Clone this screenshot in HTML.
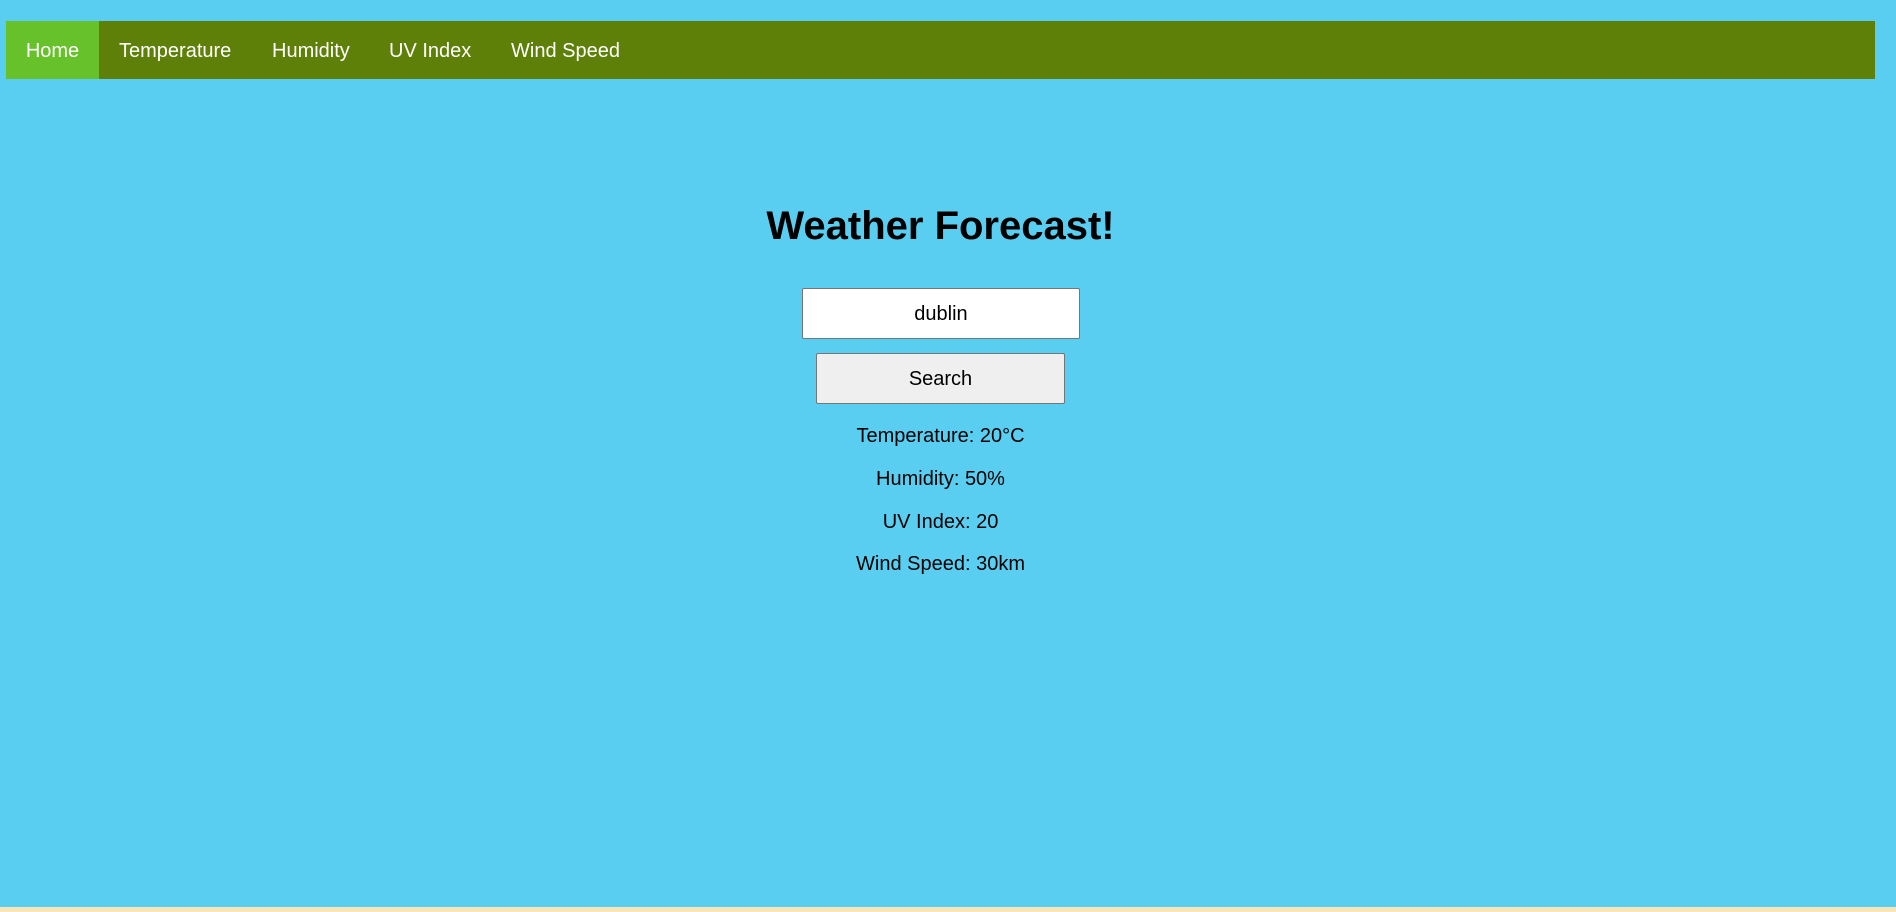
<!DOCTYPE html>
<html><head><meta charset="utf-8"><style>
html,body{margin:0;padding:0;width:1896px;height:912px;overflow:hidden;background:#5acef0;font-family:"Liberation Sans",Arial,sans-serif;position:relative}
.nav{position:absolute;left:6px;top:21px;width:1869px;height:58px;background:#5e7f08}
.nav a{position:absolute;top:1px;height:58px;line-height:58px;color:#fff;font-size:20px;text-decoration:none}
.home{background:#66c12a;left:0;top:0 !important;width:93px;text-align:center}
.home span{position:relative;top:1px}
.c{position:absolute;left:0;width:1881px;text-align:center;color:#000}
h1{margin:0;font-size:40px;font-weight:bold}
.inp{position:absolute;left:802px;top:288px;width:276px;height:49px;background:#fff;border:1px solid #767676;border-radius:2px;text-align:center;line-height:51px;font-size:20px}
.btn{position:absolute;left:816px;top:353px;width:247px;height:49px;background:#efefef;border:1px solid #767676;border-radius:2px;text-align:center;line-height:51px;font-size:20px}
.r{font-size:20px;line-height:24px}
.strip{position:absolute;left:0;top:907px;width:1896px;height:5px;background:#f8e5b8}
</style></head><body>
<div class="nav">
<a class="home"><span>Home</span></a>
<a style="left:113px">Temperature</a>
<a style="left:266px">Humidity</a>
<a style="left:383px">UV Index</a>
<a style="left:505px">Wind Speed</a>
</div>
<div class="c" style="top:204px"><h1>Weather Forecast!</h1></div>
<div class="inp">dublin</div>
<div class="btn">Search</div>
<div class="c r" style="top:424px">Temperature: 20°C</div>
<div class="c r" style="top:467px">Humidity: 50%</div>
<div class="c r" style="top:510px">UV Index: 20</div>
<div class="c r" style="top:552px">Wind Speed: 30km</div>
<div class="strip"></div>
</body></html>
